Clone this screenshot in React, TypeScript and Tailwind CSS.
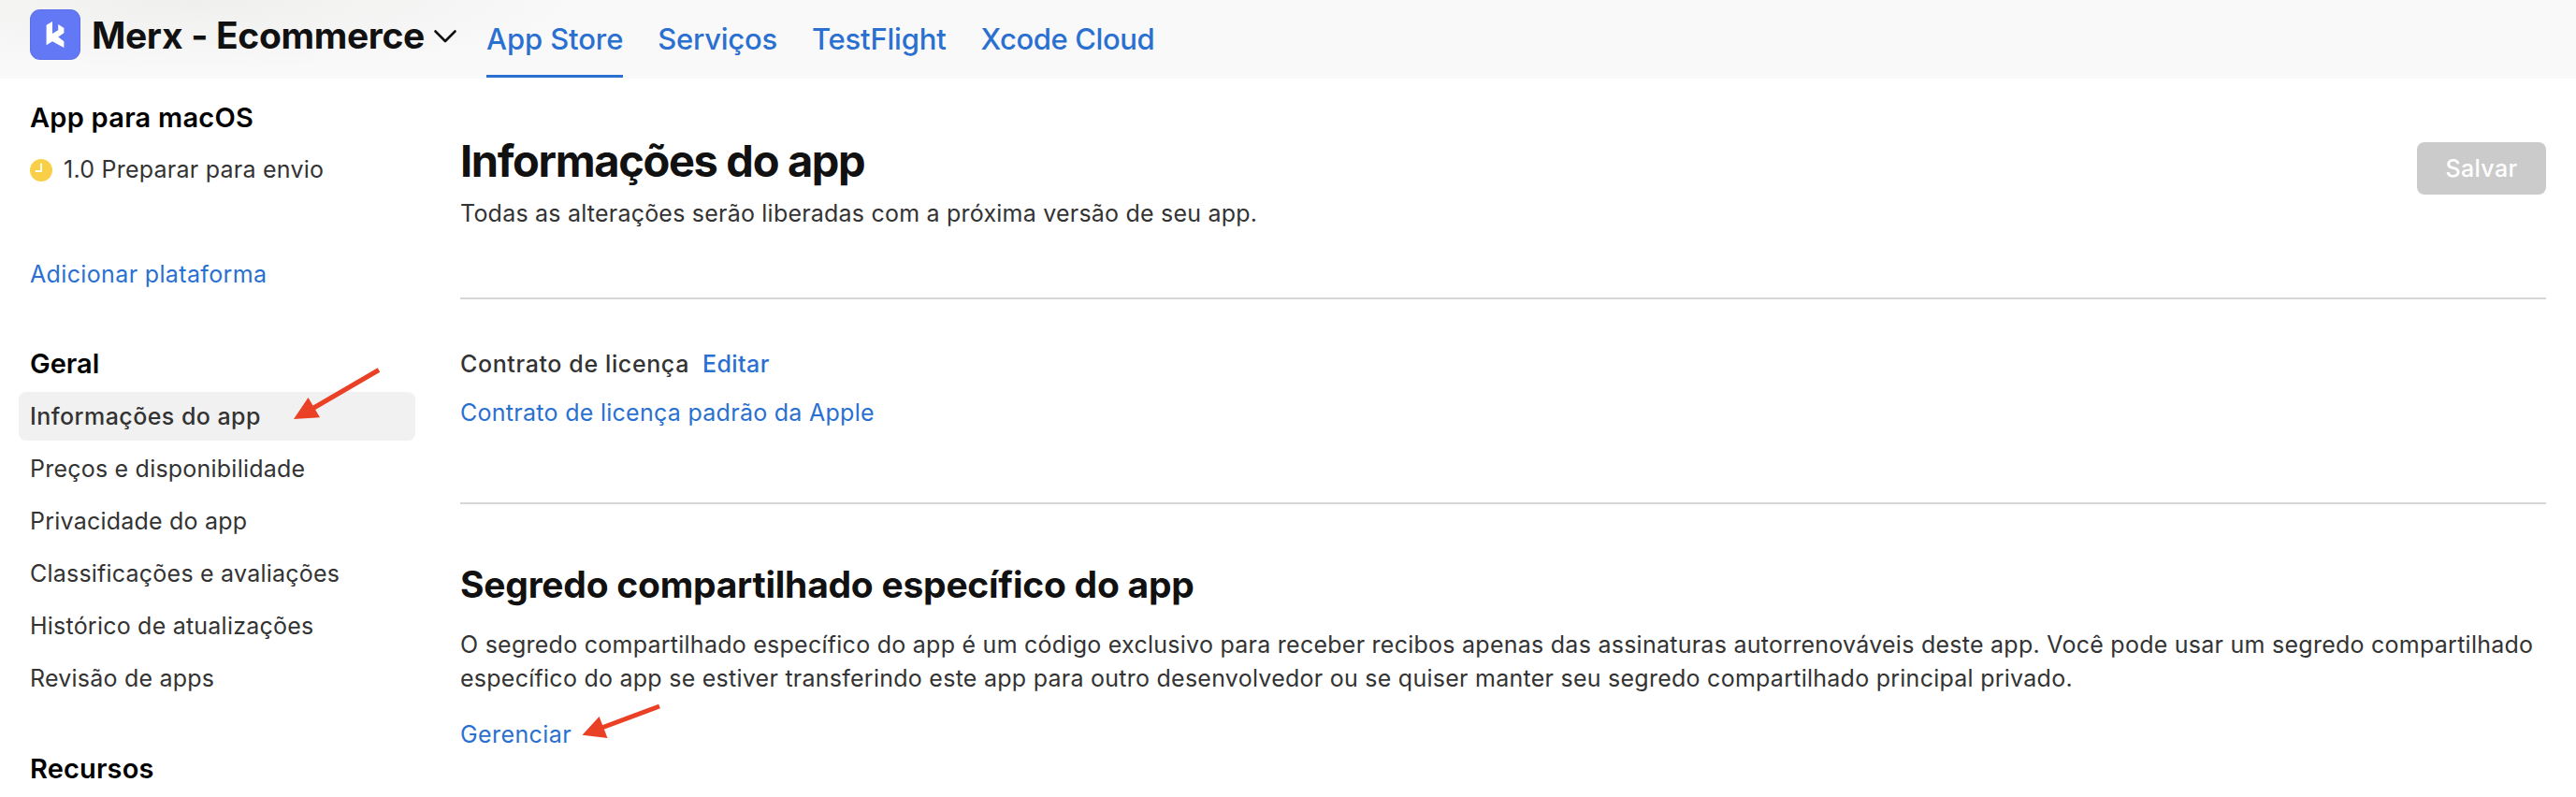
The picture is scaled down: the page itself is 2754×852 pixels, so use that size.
const tabs = [
  { label: "App Store", className: "border-[#2a70d0] tracking-[-0.1px]" },
  { label: "Serviços", className: "border-transparent tracking-[-0.25px]" },
  { label: "TestFlight", className: "border-transparent tracking-[-0.2px]" },
  { label: "Xcode Cloud", className: "border-transparent tracking-[-0.4px]" },
];

const items = [
  "Informações do app",
  "Preços e disponibilidade",
  "Privacidade do app",
  "Classificações e avaliações",
  "Histórico de atualizações",
  "Revisão de apps",
];

function Logo() {
  return (
    <svg width="54" height="54" viewBox="0 0 54 54" className="shrink-0">
      <rect width="54" height="54" rx="11" fill="#5a6de6" />
      <rect x="0.8" y="0.8" width="52.4" height="52.4" rx="10.4" fill="#6378f5" />
      <path
        d="M17.6 16.8 24 13v13l6.2-3.7V16l6.2 4v5.2l-6.2 4.3 6.2 4.7V41L24 34.2l-6.4 4.1Z"
        fill="#fff"
      />
    </svg>
  );
}

function Header() {
  return (
    <header className="flex h-[84px] items-start bg-[#f9f9f9] bg-[radial-gradient(ellipse_420px_76px_at_210px_0px,#efefee,#f9f9f9)] bg-no-repeat pl-8">
      <div className="mt-[10px] flex h-[54px] w-[488px] items-center">
        <Logo />
        <h1 className="ml-3 pt-0.5 text-[39px] leading-[54px] font-bold tracking-[-0.35px] whitespace-nowrap text-[#111]">
          Merx - Ecommerce
        </h1>
        <svg width="26" height="16" viewBox="0 0 26 16" className="mt-1 ml-[9px]">
          <path
            d="M2.5 2.5 13 13 23.5 2.5"
            fill="none"
            stroke="#111"
            strokeWidth="2.6"
            strokeLinecap="round"
            strokeLinejoin="round"
          />
        </svg>
      </div>
      <nav className="flex gap-[37px]">
        {tabs.map((t) => (
          <a
            key={t.label}
            className={`h-[83px] border-b-[3px] pt-[3px] text-[31px] leading-[77px] font-medium text-[#2a70d0] ${t.className}`}
          >
            {t.label}
          </a>
        ))}
      </nav>
    </header>
  );
}

function Sidebar() {
  return (
    <aside className="w-[472px] shrink-0 pt-6 pr-7 pl-5">
      <h2 className="pl-3 text-[29px] leading-9 font-semibold tracking-[0.25px] text-black">
        App para macOS
      </h2>
      <div className="mt-[10px] flex h-14 items-center gap-3 pl-3">
        <svg width="24" height="24" viewBox="0 0 24 24">
          <circle cx="12" cy="12" r="12" fill="#f8cf47" />
          <path d="M12 4.5V13H5.8" fill="none" stroke="#fff" strokeWidth="1.8" />
        </svg>
        <span className="tracking-[0.24px]">1.0 Preparar para envio</span>
      </div>
      <a className="mt-[55px] block pl-3 leading-[56px] tracking-[0.36px] text-[#2a70d0]">
        Adicionar plataforma
      </a>
      <h2 className="mt-[50px] pl-3 text-[29px] leading-9 font-semibold text-black">
        Geral
      </h2>
      <ul className="mt-3 space-y-1">
        {items.map((i) => (
          <li
            key={i}
            className={`h-[52px] rounded-lg pl-3 leading-[52px] ${
              i === items[0]
                ? "bg-[#f1f1f1] font-medium tracking-[0.45px]"
                : "tracking-[0.22px]"
            }`}
          >
            {i}
          </li>
        ))}
      </ul>
      <h2 className="mt-[53px] pl-3 text-[29px] leading-9 font-semibold tracking-[0.15px] text-black">
        Recursos
      </h2>
    </aside>
  );
}

function Arrow({ className, d, head }: { className: string; d: string; head: string }) {
  return (
    <svg className={`pointer-events-none absolute overflow-visible ${className}`} width="96" height="60">
      <path d={d} stroke="#ea4025" strokeWidth="5" fill="none" />
      <path d={head} fill="#ea4025" />
    </svg>
  );
}

function Main() {
  return (
    <main className="ml-5 w-[2230px] pt-[60px]">
      <div className="flex items-start justify-between">
        <div>
          <h2 className="text-[47px] leading-[56px] font-bold tracking-[-1.35px] text-[#111]">
            Informações do app
          </h2>
          <p className="mt-[10px] leading-9 tracking-[0.215px]">
            Todas as alterações serão liberadas com a próxima versão de seu app.
          </p>
        </div>
        <button className="mt-2 h-14 w-[138px] rounded-lg bg-[#cbcbcb] pt-px font-medium tracking-[0.35px] text-white">
          Salvar
        </button>
      </div>
      <hr className="mt-[72px] border-t-2 border-[#d6d6d6]" />
      <section className="pt-[51px] pb-[78px] leading-9">
        <p className="flex gap-[14px] font-medium tracking-[0.62px]">
          Contrato de licença
          <a className="tracking-[0.4px] text-[#2a70d0]">Editar</a>
        </p>
        <a className="mt-4 block tracking-[0.28px] text-[#2a70d0]">
          Contrato de licença padrão da Apple
        </a>
      </section>
      <hr className="border-t-2 border-[#d6d6d6]" />
      <section className="pt-[62px]">
        <h2 className="text-[39px] leading-[48px] font-bold tracking-[-0.255px] text-[#111]">
          Segredo compartilhado específico do app
        </h2>
        <p className="mt-[22px] leading-9 tracking-[0.255px] whitespace-nowrap">
          O segredo compartilhado específico do app é um código exclusivo para
          receber recibos apenas das assinaturas autorrenováveis deste app. Você
          pode usar um segredo compartilhado
          <br />
          específico do app se estiver transferindo este app para outro
          desenvolvedor ou se quiser manter seu segredo compartilhado principal
          privado.
        </p>
        <a className="mt-6 block leading-9 tracking-[0.4px] text-[#2a70d0]">
          Gerenciar
        </a>
      </section>
    </main>
  );
}

export default function App() {
  return (
    <div className="relative h-[852px] w-[2754px] overflow-hidden bg-white font-['Inter',sans-serif] text-[25px] text-[#333]">
      <Header />
      <div className="flex">
        <Sidebar />
        <Main />
      </div>
      <Arrow
        className="top-[390px] left-[310px]"
        d="M95 5.5 22 48"
        head="M4 58 19.5 35 32 56.2Z"
      />
      <Arrow
        className="top-[750px] left-[618px]"
        d="M87 5 24 28.5"
        head="M4.5 35.8 22.6 16 31.5 39Z"
      />
    </div>
  );
}
